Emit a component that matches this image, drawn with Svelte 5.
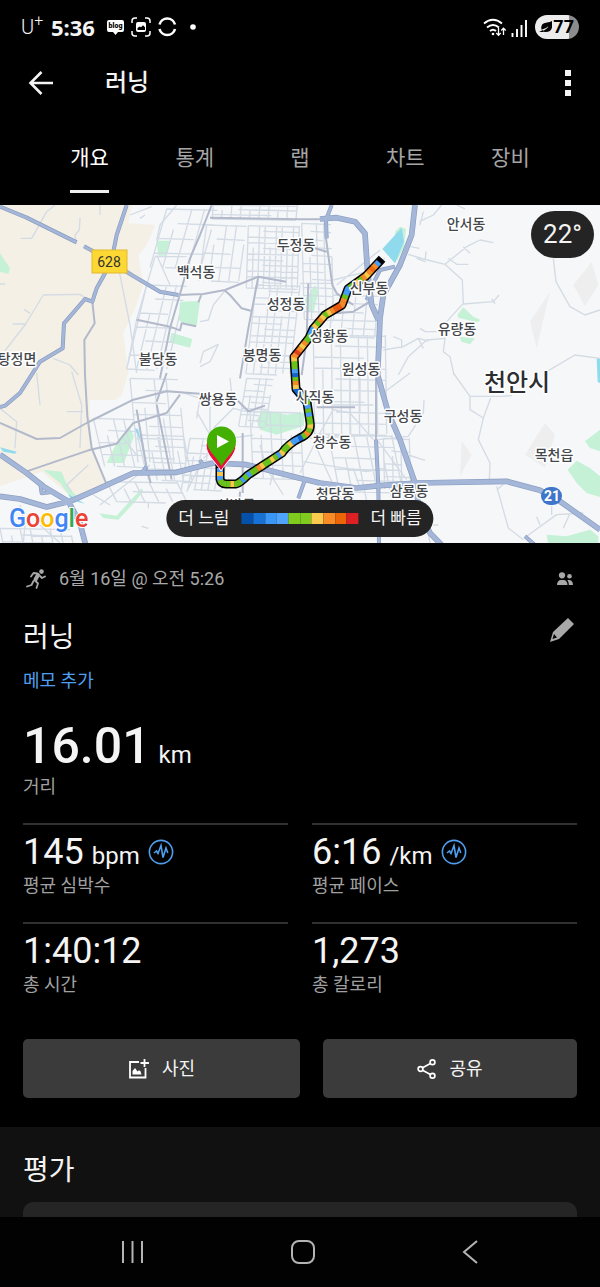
<script lang="ts">
  const tabs = ['개요', '통계', '랩', '차트', '장비'];
  let active = $state('개요');

  const metrics = [
    { value: '145', unit: 'bpm', label: '평균 심박수', zone: true },
    { value: '6:16', unit: '/km', label: '평균 페이스', zone: true },
    { value: '1:40:12', unit: '', label: '총 시간', zone: false },
    { value: '1,273', unit: '', label: '총 칼로리', zone: false }
  ];

  const legend = ['#0550a8', '#1872d6', '#3b97f5', '#4fa5fb', '#7fcc1e', '#7fcc1e', '#fccb4d', '#fa8c27', '#ec6608', '#dc2024'];

  const places = [
    { name: '두정동', x: 296, y: 45 },
    { name: '안서동', x: 466, y: 24 },
    { name: '백석동', x: 196, y: 72 },
    { name: '신부동', x: 369, y: 88 },
    { name: '성정동', x: 286, y: 104 },
    { name: '성황동', x: 329, y: 136 },
    { name: '유량동', x: 457, y: 129 },
    { name: '탕정면', x: 17, y: 159 },
    { name: '불당동', x: 158, y: 159 },
    { name: '봉명동', x: 262, y: 155 },
    { name: '원성동', x: 361, y: 169 },
    { name: '쌍용동', x: 218, y: 199 },
    { name: '사직동', x: 315, y: 197 },
    { name: '구성동', x: 403, y: 216 },
    { name: '청수동', x: 332, y: 242 },
    { name: '목천읍', x: 554, y: 255 },
    { name: '신방동', x: 236, y: 305 },
    { name: '청당동', x: 335, y: 294 },
    { name: '삼룡동', x: 409, y: 291 }
  ];

  // One letter per stretch of the route, from the start pin onwards
  const pace: Record<string, string> = {
    B: '#1565c8', b: '#459df5', g: '#6cc21c', y: '#f8c648', o: '#f58a28', O: '#ee6a10', r: '#e0401c', R: '#ea5a10'
  };
  const stretches = 'bybgggyggbgbggoyggygbyggybbBgogyggbgbgygbByogBbggyoroyoggbbygoygyoRRoogbbggygoyoOob'.split('');
  const route =
    'M220 263 L220 274 Q221 279 226 279 L236 279 Q240 278 248 270 L282 248 Q288 239 300 233 Q312 228 310 217 L307 197 L296 184 L294 152 L309 133 L313 124 L325 110 L342 100 L348 84 L366 71 L379 57';

  // Fine street mesh: [x, y, columns, rows, step x, step y, slant]
  const blocks = [
    [745, 62, 9, 11, 17, 17, -6],
    [640, 0, 9, 3, 28, 14, -4],
    [768, 240, 6, 14, 22, 19, -30],
    [620, 60, 4, 4, 30, 42, -24],
    [440, 240, 4, 6, 30, 42, -60],
    [500, 12, 4, 4, 38, 44, -50],
    [905, 55, 4, 12, 22, 24, 8],
    [1000, 270, 4, 5, 34, 25, -12],
    [940, 390, 8, 9, 27, 33, 4],
    [985, 690, 5, 6, 38, 34, 40],
    [740, 520, 4, 8, 20, 18, -24],
    [570, 700, 6, 7, 20, 22, -26],
    [390, 520, 4, 7, 36, 36, 24],
    [420, 690, 5, 4, 26, 34, 26],
    [280, 640, 4, 4, 30, 36, 34],
    [750, 620, 5, 5, 30, 40, 10],
    [1150, 700, 3, 4, 26, 38, 4],
    [0, 970, 7, 3, 30, 20, 12],
    [320, 830, 5, 2, 42, 30, 30]
  ];

  function mesh([x, y, cols, rows, dx, dy, slant]: number[]) {
    const w = cols * dx;
    const h = rows * dy;
    let d = '';
    for (let i = 0; i <= cols; i++) {
      // every third street stops short so the mesh is less regular
      const cut = i % 3 === 1 ? 0.35 : 0;
      d += `M${x + i * dx + slant * cut} ${y + h * cut}L${x + i * dx + slant} ${y + h}`;
    }
    for (let j = 0; j <= rows; j++) {
      const s = (slant * j) / rows;
      const from = j % 3 === 1 ? w * 0.3 : 0;
      const to = j % 4 === 2 ? w * 0.7 : w;
      d += `M${x + s + from} ${y + j * dy}L${x + s + to} ${y + j * dy + 4}`;
    }
    return d;
  }
  const streets = blocks.map(mesh).join('');
</script>

<div class="app">
  <div class="status">
    <span class="carrier">U<sup>+</sup></span>
    <span class="clock">5:36</span>
    <svg class="notes" width="94" height="22" viewBox="0 0 94 22">
      <path d="M3 4h13a2 2 0 0 1 2 2v8a2 2 0 0 1-2 2h-4l-2.500 3-2.500-3H3a2 2 0 0 1-2-2V6a2 2 0 0 1 2-2z" fill="#fff" />
      <text x="9.500" y="12" class="blog">blog</text>
      <path d="M26 7V5a3 3 0 0 1 3-3h2M39 2h2a3 3 0 0 1 3 3v2M44 15v2a3 3 0 0 1-3 3h-2M31 20h-2a3 3 0 0 1-3-3v-2" fill="none" stroke="#fff" stroke-width="1.500" />
      <rect x="30" y="6" width="10" height="10" rx="2" fill="#fff" />
      <path d="M31.500 14v-2l2-1.500 1.500.800 2-2 2 2V14z" fill="#000" />
      <path d="M53.500 8.500a8 8 0 0 1 15.500 0M69 13a8 8 0 0 1-15.500 0" fill="none" stroke="#fff" stroke-width="2.600" />
      <circle cx="87" cy="11" r="2.800" fill="#fff" />
    </svg>
    <span class="spacer"></span>
    <svg width="45" height="22" viewBox="0 0 45 22" fill="none" stroke="#fff">
      <path d="M1 7.500Q10 0 19 7.500M4 11.500q6-5 12 0M7 15q3-2.500 6 0" stroke-width="1.900" />
      <circle cx="10" cy="18" r="1.300" fill="#fff" stroke="none" />
      <path d="M15.500 12v7M13.300 17l2.200 2.400 2.200-2.400M20.500 19v-6M18.300 14.500l2.200-2.400 2.200 2.400" stroke-width="1.300" />
      <path d="M29.500 17v4M34 13v8M38.500 9v12M43 4v17" stroke-width="1.900" />
    </svg>
    <span class="battery">
      <svg width="14" height="14" viewBox="0 0 14 14">
        <path d="M13 1v6.500Q12 12 6.500 12 4 12 3 11 8 9.500 9.500 6 7 9 2.500 9.800 1 3 8 2.500 11 2 13 1zM0 12l4-2v2z" fill="#000" />
      </svg>77
    </span>
  </div>

  <header class="bar">
    <button class="icon" aria-label="뒤로">
      <svg width="26" height="26" viewBox="0 0 26 26" fill="none" stroke="#f4f4f4" stroke-width="2.600">
        <path d="M25 13H3M13.500 2L2.500 13l11 11" />
      </svg>
    </button>
    <span class="bar-title">러닝</span>
    <span class="spacer"></span>
    <button class="icon" aria-label="더보기">
      <svg width="6" height="28" viewBox="0 0 6 28" fill="#f4f4f4">
        <path d="M0 1h6v6H0zM0 11h6v6H0zM0 21h6v6H0z" />
      </svg>
    </button>
  </header>

  <nav class="tabs">
    {#each tabs as tab}
      <button class="tab" class:active={tab === active} onclick={() => (active = tab)}><span>{tab}</span></button>
    {/each}
  </nav>

  <div class="map">
    <svg class="canvas" viewBox="0 0 600 338" role="img" aria-label="지도">
      <rect width="600" height="338" fill="#f6f7f8" />

      <!-- terrain, drawn at three units per pixel -->
      <g transform="scale(0.33333)">
        <path class="rural" d="M0 0H395L385 55L465 60L440 120L415 150L430 240L405 310L370 385L385 504L365 570L345 585H268L275 734L315 834L215 876L125 800L0 844Z" />
        <g class="park">
          <path d="M470 107H512L497 152H475ZM540 290L600 288L590 362L550 355L536 345ZM515 383L577 402L570 428L507 412ZM0 145L30 190L25 207L0 200Z" />
          <path d="M1185 80L1200 65L1218 72L1212 125L1190 172ZM915 285L945 240L955 260L940 325L920 315ZM1372 330L1390 307L1420 335L1442 345L1432 352L1375 338ZM1378 395L1425 400L1410 418L1385 410Z" />
          <path d="M320 774L345 724L388 664L402 694L372 774ZM130 794L185 800L205 850L232 874L215 882L180 834ZM770 644L790 615L860 629L912 622V662L830 689L780 674ZM298 925L350 932L425 850L430 858L405 890L355 944L310 939Z" />
          <path d="M1755 709L1800 674V739L1770 729ZM1703 794L1730 767L1770 789L1800 814V876L1760 864L1730 834ZM1640 989L1700 994L1770 974L1795 994V1020H1645Z" />
        </g>
        <path class="hill" d="M1650 260L1610 430L1590 350ZM1775 170L1795 240L1755 303L1720 240ZM1635 654L1665 689L1635 789L1575 749ZM1385 709L1415 749L1380 814Z" />
        <path class="water" d="M1147 132L1205 68L1212 110L1185 175ZM1790 460H1800V535L1793 530ZM403 669L414 672L427 722ZM0 727L50 740L45 746L10 740ZM205 868L255 896L215 886Z" />

        <path class="minor" d={streets} />
        <path class="minor" d="M62 100H95L140 20L165 0M240 38L238 75L225 90L228 110M300 0V30M0 237H15M15 437L75 360L130 270L240 268L262 282M277 270L315 215M358 200L390 360L410 504M72 313L90 325M38 357H75M160 460L210 480L235 510M390 30L455 5M420 40L435 30M465 155L410 344L385 470M465 155H560M470 107L480 60L530 0M470 150L510 240M600 475L610 440L655 418L630 470L600 485M640 300L625 345L600 350M675 257L640 300" />
        <path class="minor" d="M1225 148L1270 162L1335 178L1387 225L1390 295L1340 350L1335 400L1280 405L1225 455L1195 510M1335 178L1400 125L1440 105L1480 113M1390 125L1410 145M1390 297L1480 290L1497 270M1475 282L1485 296M1660 160L1668 230L1710 305L1755 330L1800 315M1640 500L1725 450L1800 460M1258 50L1300 30L1325 0M1270 20L1260 60M1370 0L1395 12M1335 400L1330 440L1350 455L1362 510M1150 435L1210 425L1255 400L1285 408M1255 400L1270 430M1180 395L1205 405V430M1260 370L1275 380H1310M1345 160L1370 178H1405M1232 125L1258 130M1250 160L1275 170L1278 140M1000 225L1100 200L1155 160M1010 240L1140 135M900 235H1000" />
        <path class="minor" d="M0 610L50 650L45 730M215 500L245 600L240 730M200 620H250M120 600L110 504M265 780L200 840L215 860M300 900L450 780M370 700L410 750M490 640L500 700M590 620L630 690M560 860L600 780M640 670L700 610L740 620M610 760L690 700L760 690M630 600V680M780 720L800 790L850 870M810 840L820 800M425 964L445 970M445 894V910M330 900L280 870M60 900L75 960L70 1014M120 960L180 1014M540 560L600 580L590 640M700 610L690 520" />
        <path class="minor" d="M1360 504L1410 574V614L1450 639L1435 704L1470 774L1468 829M1410 574H1500L1535 572M1450 639L1472 579M1490 844L1525 969L1570 1004M1490 855L1510 838M1135 704L1225 694L1270 624L1272 584M1155 560L1230 504M900 804L960 684L1000 614L1050 624L1120 704M1135 709L1220 824M1225 750L1275 766M1580 994L1670 929L1750 924M1610 935L1620 960M1655 904V930M1710 925L1690 970M910 770L1100 800L1150 790M930 700L1120 690M950 730L1000 840M1060 790L1080 850M1300 960H1315M1270 900L1290 1014M1000 600L1120 600M1050 504V700M1080 504V620" />

        <path class="mid" d="M635 0L600 90L570 160L545 250L510 370L480 520M630 38L900 43H960M535 270L610 267L675 255L775 215L858 230M675 257L690 270L725 310L752 317M775 215L745 370L720 520M410 344L510 365L540 376L545 355L588 364M277 290L284 355L253 405L255 510L262 634L275 729L320 839M605 267L595 292" />
        <path class="mid" d="M978 100L997 240L1010 265L1060 300M1010 325L1060 320L1110 290M925 235L920 400L905 510M945 130L980 140" />
        <path class="mid" d="M0 654L110 702L180 699L260 654L400 584L500 559L600 566M80 799L265 736L350 716L400 654L500 624L540 569M410 614L440 789L452 834M470 599L515 824M728 684V864M700 574L745 619L795 602M500 504L470 590M1128 504V704M950 607H1065M720 860L718 900" />

        <g class="casing">
          <path d="M0 5L80 38L230 112M252 124L290 145L400 213L480 260L535 270M380 0L350 90L340 140L315 205L290 250L277 290L255 282L192 355L188 430L120 470L60 564L15 602L0 606M995 0L978 45L980 100M1185 185L1140 195L1115 245L1100 285" />
          <path class="wide" d="M1245 0L1235 90L1200 180L1150 270L1140 340L1133 510L1165 624L1200 704L1245 834L1260 924L1290 984L1325 1020M960 42L1010 38L1065 50L1095 85L1102 190L1115 300L1135 345" />
          <path class="wide" d="M0 749L80 804L130 844L205 889L240 954L257 1020M0 874L60 882L140 906L210 889L290 854L400 804L530 802L640 774L740 779L800 794L900 820L960 834L1070 849L1140 842L1250 834L1520 829L1620 856L1680 889L1800 974" />
          <path d="M1128 704L1135 844L1137 1020M915 824L895 880M1575 994L1605 1020M600 765L610 780M440 784L425 804M120 830L125 865L160 860" />
        </g>
        <g class="major">
          <path d="M0 5L80 38L230 112M252 124L290 145L400 213L480 260L535 270M380 0L350 90L340 140L315 205L290 250L277 290L255 282L192 355L188 430L120 470L60 564L15 602L0 606M995 0L978 45L980 100M1185 185L1140 195L1115 245L1100 285" />
          <path class="wide" d="M1245 0L1235 90L1200 180L1150 270L1140 340L1133 510L1165 624L1200 704L1245 834L1260 924L1290 984L1325 1020M960 42L1010 38L1065 50L1095 85L1102 190L1115 300L1135 345" />
          <path class="wide" d="M0 749L80 804L130 844L205 889L240 954L257 1020M0 874L60 882L140 906L210 889L290 854L400 804L530 802L640 774L740 779L800 794L900 820L960 834L1070 849L1140 842L1250 834L1520 829L1620 856L1680 889L1800 974" />
          <path d="M1128 704L1135 844L1137 1020M915 824L895 880M1575 994L1605 1020M600 765L610 780M440 784L425 804M120 830L125 865L160 860" />
        </g>
      </g>

      <rect x="92" y="45" width="35" height="23" fill="#fdd835" stroke="#e0b92c" />
      <text class="road" x="109" y="62">628</text>
      <rect x="541" y="282" width="21" height="18" rx="9" fill="#3f76c9" />
      <text class="shield" x="552" y="296">21</text>

      <!-- route -->
      <path d={route} fill="none" stroke="#000" stroke-width="9" stroke-linejoin="round" stroke-linecap="square" />
      {#each stretches as s, i}
        <path d={route} fill="none" stroke={pace[s]} stroke-width="6" pathLength={stretches.length} stroke-dasharray="1.100 1000" stroke-dashoffset={-i} />
      {/each}

      {#each places as p}
        <text class="place" x={p.x} y={p.y}>{p.name}</text>
      {/each}
      <text class="city" x="517" y="186">천안시</text>

      <path d="M206 240a15 15 0 0 1 30 0c0 10-9 16-15 26-6-10-15-16-15-26z" fill="#e9113c" stroke="#fff" />
      <path d="M207 236a14.500 14.500 0 0 1 29 0c0 10-9 15-14.500 25-5.500-10-14.500-15-14.500-25z" fill="#43b000" />
      <path d="M217 230v13l12-6.500z" fill="#fff" />

      <text class="google" x="9" y="322"><tspan fill="#4285f4">G</tspan><tspan fill="#ea4335">o</tspan><tspan fill="#fbbc05">o</tspan><tspan fill="#4285f4">g</tspan><tspan fill="#34a853">l</tspan><tspan fill="#ea4335">e</tspan></text>
    </svg>

    <span class="temp">22°</span>
    <div class="legend">
      <span>더 느림</span>
      <span class="scale">
        {#each legend as color}
          <i style="background: {color}"></i>
        {/each}
      </span>
      <span>더 빠름</span>
    </div>
  </div>

  <section class="activity">
    <div class="meta">
      <svg width="20" height="20" viewBox="0 0 20 20" fill="none" stroke="#a8a8a8" stroke-linecap="round" stroke-linejoin="round">
        <circle cx="15.500" cy="2.600" r="2.300" fill="#a8a8a8" stroke="none" />
        <path d="M12 6L9.500 10.500" stroke-width="4" />
        <path d="M11.500 4.500L7.500 4 5 7.500M14 7l2 2 3-1.500M9.500 12l2.500 2.500-1.500 4.500M7.500 12l-2 4-4.500 1.500" stroke-width="1.800" />
      </svg>
      <span>6월 16일 @ 오전 5:26</span>
      <span class="spacer"></span>
      <svg width="18" height="14" viewBox="0 0 18 14" fill="#a8a8a8">
        <circle cx="6" cy="3.300" r="3.100" />
        <circle cx="13.500" cy="4.300" r="2.300" />
        <path d="M1 13c0-3 1.500-5 4-5h2.500c2.500 0 4 2 4 5zM12.800 13c0-2-.500-3.500-1.500-4.700 3.500-.800 5.700 1.200 5.700 4.700z" />
      </svg>
    </div>
    <div class="heading">
      <h1>러닝</h1>
      <button class="icon edit" aria-label="수정">
        <svg width="26" height="26" viewBox="0 0 26 26" fill="#a8a8a8">
          <path fill-rule="evenodd" d="M19 1l6 6L10 22 1 25l3-10zM5 17l-1.500 5L8 20.500z" />
        </svg>
      </button>
    </div>
    <a class="memo" href="#memo">메모 추가</a>

    <div class="distance">16.01<small>km</small></div>
    <div class="label">거리</div>

    <div class="metrics">
      {#each metrics as m}
        <div class="metric">
          <div class="value">
            <span>{m.value}{#if m.unit}<small>{m.unit}</small>{/if}</span>
            {#if m.zone}
              <svg width="26" height="26" viewBox="0 0 26 26" fill="none" stroke="#4f9fee">
                <circle cx="13" cy="13" r="11.600" stroke-width="1.600" />
                <path d="M6 14l2.500-2 1.500 2.500L13 6.500l2 12L18 9l1.800 5" stroke-width="1.600" />
              </svg>
            {/if}
          </div>
          <div class="label">{m.label}</div>
        </div>
      {/each}
    </div>

    <div class="actions">
      <button>
        <svg width="21" height="20" viewBox="0 0 21 20" fill="none" stroke="#fff" stroke-width="1.800">
          <path d="M11 3H2v15.500h15.500V9M16.500 0v8M12.500 4H21" />
          <path d="M4.500 15.500v-3.500l2.500-3 2.500 3.500 1.500-1.200 1.500 1 1 3.200z" fill="#fff" stroke="none" />
        </svg>
        사진
      </button>
      <button>
        <svg width="19" height="20" viewBox="0 0 19 20" fill="none" stroke="#fff" stroke-width="1.700">
          <circle cx="3.500" cy="10" r="2.400" />
          <circle cx="15.500" cy="3.300" r="2.400" />
          <circle cx="15.500" cy="16.700" r="2.400" />
          <path d="M5.600 8.800l7.800-4.300M5.600 11.200l7.800 4.300" />
        </svg>
        공유
      </button>
    </div>
  </section>

  <section class="rating">
    <h2>평가</h2>
    <div class="card"></div>
  </section>

  <footer class="keys">
    <button aria-label="최근 앱">
      <svg width="24" height="26" viewBox="0 0 24 26"><path d="M2 2v22M11.500 2v22M21 2v22" /></svg>
    </button>
    <button aria-label="홈">
      <svg width="26" height="26" viewBox="0 0 26 26"><rect x="2" y="2" width="22" height="22" rx="7" /></svg>
    </button>
    <button aria-label="이전">
      <svg width="18" height="26" viewBox="0 0 18 26"><path d="M16 2L3 13l13 11" /></svg>
    </button>
  </footer>
</div>

<style>
  :global(body) {
    background: #000;
  }

  .app {
    background: #000;
    color: #f4f4f4;
    font-family: Roboto, 'Noto Sans CJK KR', sans-serif;
  }

  button {
    background: none;
    border: 0;
    padding: 0;
    color: inherit;
    font: inherit;
    cursor: pointer;
  }

  svg {
    display: block;
    flex: none;
  }

  h1,
  h2 {
    margin: 0;
    font-size: 28px;
    font-weight: 400;
  }

  small {
    margin-left: 8px;
    font-size: 24px;
    font-weight: 400;
    line-height: 24px;
  }

  .spacer {
    flex: 1;
  }

  /* status bar */
  .status {
    display: flex;
    align-items: center;
    height: 53px;
    padding: 0 21px;
  }

  .carrier {
    width: 30px;
    font-size: 20px;
    font-weight: 300;
    line-height: 24px;
  }

  .carrier sup {
    font-size: 16px;
    line-height: 0;
  }

  .clock {
    font-family: 'Noto Sans', sans-serif;
    font-size: 22px;
    font-weight: 700;
  }

  .notes {
    margin-left: 11px;
  }

  .blog {
    font-family: Roboto, sans-serif;
    font-size: 7px;
    font-weight: 900;
    text-anchor: middle;
  }

  .battery {
    display: flex;
    align-items: center;
    height: 24px;
    padding: 0 5px 0 4px;
    margin-left: 7px;
    border-radius: 12px;
    background: linear-gradient(90deg, #ececec 77%, #8c8c8c 77%);
    color: #000;
    font-size: 18px;
    font-weight: 700;
  }

  /* app bar */
  .bar {
    display: flex;
    align-items: center;
    height: 60px;
    padding: 0 29px 0 28px;
  }

  .bar-title {
    margin-left: 51px;
    font-size: 24px;
    font-weight: 500;
    line-height: 30px;
  }

  .tabs {
    display: grid;
    grid-template-columns: repeat(5, 1fr);
    padding: 24px 37px 12px;
  }

  .tab {
    color: #a6a6a6;
    font-size: 21px;
    line-height: 42px;
  }

  .tab span {
    display: inline-block;
    padding-bottom: 11px;
    border-bottom: 3px solid transparent;
  }

  .tab.active span {
    color: #fff;
    border-color: #f0f0f0;
  }

  /* map */
  .map {
    position: relative;
  }

  .canvas {
    width: 100%;
    height: auto;
  }

  .rural {
    fill: #f5f0e5;
  }

  .park {
    fill: #c5f1d6;
  }

  .hill {
    fill: #eeeeee;
  }

  .water {
    fill: #90daee;
  }

  .minor,
  .mid,
  .casing,
  .major {
    fill: none;
    stroke-linejoin: round;
  }

  .minor {
    stroke: #d3dbe5;
    stroke-width: 4;
  }

  .mid {
    stroke: #b2b9cb;
    stroke-width: 6;
  }

  .casing {
    stroke: #8a9cc0;
    stroke-width: 12;
  }

  .casing .wide {
    stroke-width: 17;
  }

  .major {
    stroke: #a5b7d8;
    stroke-width: 8;
  }

  .major .wide {
    stroke-width: 13;
  }

  .place,
  .city {
    fill: #44474c;
    stroke: #fff;
    stroke-width: 3px;
    stroke-linejoin: round;
    paint-order: stroke;
    font-size: 14px;
    font-weight: 500;
    text-anchor: middle;
  }

  .city {
    fill: #2c2e32;
    font-size: 24px;
  }

  .road,
  .shield {
    fill: #333;
    font-size: 14px;
    text-anchor: middle;
  }

  .shield {
    fill: #fff;
    font-weight: 700;
  }

  .google {
    font-size: 25px;
    font-weight: 500;
    stroke: #fff;
    stroke-width: 2px;
    paint-order: stroke;
  }

  .temp {
    position: absolute;
    top: 6px;
    right: 6px;
    padding: 0 12px;
    border-radius: 24px;
    background: #242424;
    font-size: 26px;
    line-height: 47px;
  }

  .legend {
    position: absolute;
    bottom: 6px;
    left: 50%;
    transform: translateX(-50%);
    display: flex;
    align-items: center;
    gap: 12px;
    padding: 0 12px;
    border-radius: 19px;
    background: #242424;
    font-size: 17px;
    line-height: 37px;
    white-space: nowrap;
  }

  .scale {
    display: flex;
    width: 117px;
    height: 11px;
  }

  .scale i {
    flex: 1;
  }

  /* activity summary */
  .activity {
    padding: 22px 23px 29px;
  }

  .meta {
    display: flex;
    align-items: center;
    height: 28px;
    padding: 0 3px;
    color: #a8a8a8;
    font-size: 18px;
    line-height: 26px;
  }

  .meta span:first-of-type {
    margin-left: 13px;
  }

  .heading {
    display: flex;
    justify-content: space-between;
    margin-top: 20px;
    line-height: 50px;
  }

  .edit {
    height: 34px;
    padding-right: 2px;
  }

  .memo {
    display: block;
    margin-top: 5px;
    color: #4f9fee;
    font-size: 18px;
    line-height: 26px;
    text-decoration: none;
  }

  .distance {
    margin-top: 24px;
    font-size: 50px;
    font-weight: 500;
    line-height: 56px;
  }

  .label {
    color: #a0a0a0;
    font-size: 18px;
    line-height: 26px;
  }

  .metrics {
    display: grid;
    grid-template-columns: 1fr 1fr;
    column-gap: 24px;
    margin-top: 23px;
  }

  .metric {
    padding: 6px 0 23px;
    border-top: 2px solid #303030;
  }

  .value {
    display: flex;
    align-items: center;
    gap: 8px;
    font-size: 36px;
    line-height: 42px;
  }

  .actions {
    display: grid;
    grid-template-columns: 12fr 11fr;
    column-gap: 23px;
    margin-top: 18px;
  }

  .actions button {
    display: flex;
    align-items: center;
    justify-content: center;
    gap: 13px;
    height: 59px;
    border-radius: 5px;
    background: #3b3b3b;
    font-size: 18px;
    line-height: 26px;
  }

  .rating {
    padding: 24px 23px 0;
    background: #111;
  }

  .rating h2 {
    line-height: 40px;
  }

  .card {
    height: 15px;
    margin-top: 11px;
    border-radius: 10px 10px 0 0;
    background: #252525;
  }

  /* system keys */
  .keys {
    display: flex;
    justify-content: space-around;
    align-items: center;
    height: 70px;
    padding: 0 48px;
    background: #020202;
  }

  .keys svg {
    fill: none;
    stroke: #b4b4b4;
    stroke-width: 2;
  }
</style>
